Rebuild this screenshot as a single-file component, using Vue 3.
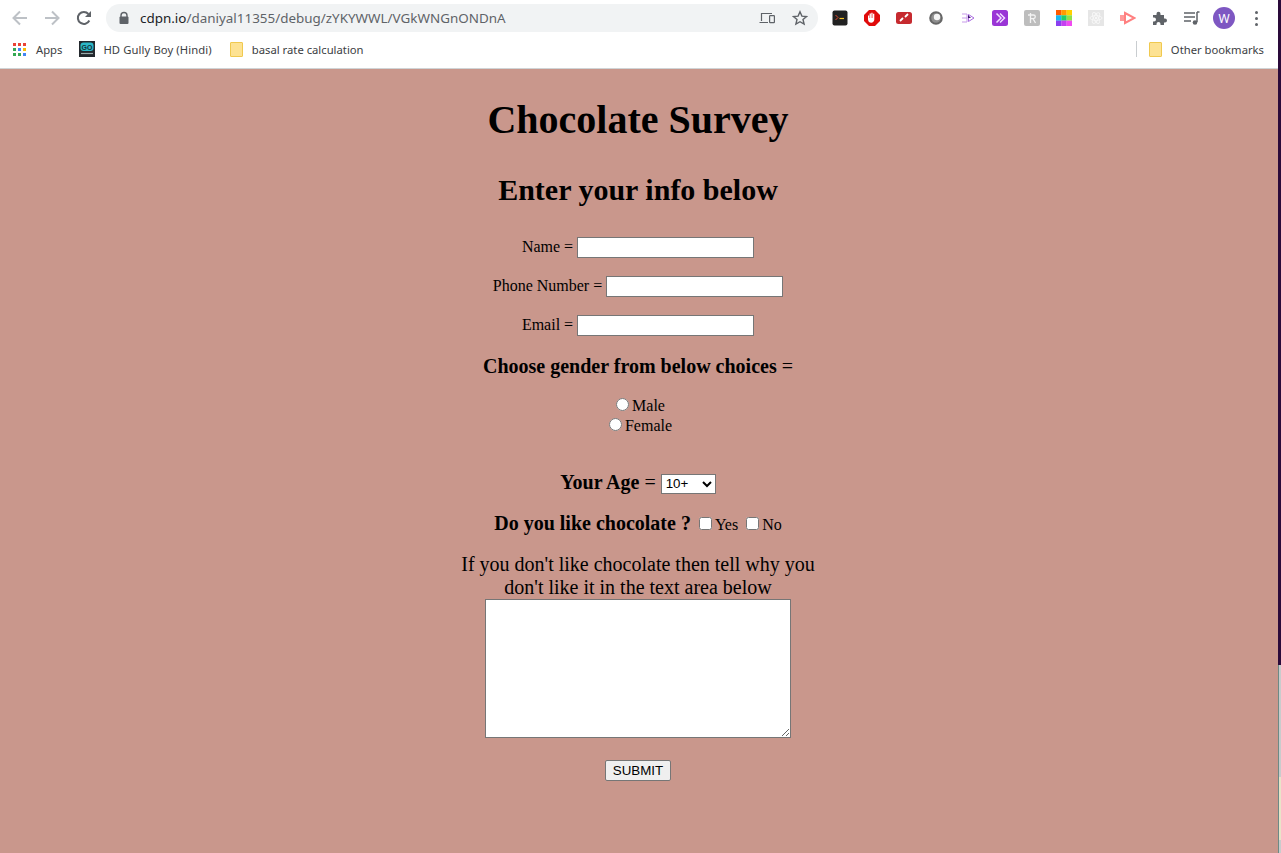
<template>
  <div class="screen">
    <div class="window">
      <div class="toolbar">
        <div class="nav-btn">
          <svg width="16" height="16" viewBox="0 0 16 16"><path d="M15 8H2M8 1.500 1.500 8 8 14.500" fill="none" stroke="#bdc1c6" stroke-width="2" /></svg>
        </div>
        <div class="nav-btn">
          <svg width="16" height="16" viewBox="0 0 16 16"><path d="M1 8h13M8 1.500 14.500 8 8 14.500" fill="none" stroke="#bdc1c6" stroke-width="2" /></svg>
        </div>
        <div class="nav-btn">
          <svg width="16" height="16" viewBox="0 0 16 16"><path d="M13.300 10.500A6 6 0 1 1 12.400 4" fill="none" stroke="#5f6368" stroke-width="2" /><path d="M15 1v6H9z" fill="#5f6368" /></svg>
        </div>
        <div class="omnibox">
          <svg class="lock" width="12" height="14" viewBox="0 0 12 14"><path d="M3 6V4.500a3 3 0 0 1 6 0V6" fill="none" stroke="#5f6368" stroke-width="1.400" /><rect x="1.500" y="5.500" width="9" height="7.500" rx="1" fill="#5f6368" /></svg>
          <span class="url"><span class="host">cdpn.io</span>/daniyal11355/debug/zYKYWWL/VGkWNGnONDnA</span>
          <svg class="omni-icon" width="16" height="12" viewBox="0 0 16 12"><path d="M2.500 9V1.500H13M.500 10.500H9" fill="none" stroke="#5f6368" stroke-width="1.200" /><rect x="10.600" y="3.600" width="4.800" height="7" rx=".6" fill="none" stroke="#5f6368" stroke-width="1.200" /></svg>
          <svg class="omni-star" width="16" height="16" viewBox="0 0 16 16"><path d="m8 1.800 1.900 4.300 4.600.4-3.500 3 1.100 4.600L8 11.700l-4.100 2.400L5 9.500l-3.500-3 4.600-.4z" fill="none" stroke="#5f6368" stroke-width="1.400" /></svg>
        </div>
        <div class="extensions">
          <div class="ext">
            <svg width="16" height="16" viewBox="0 0 16 16"><rect width="15" height="15" x=".5" y=".5" rx="2" fill="#222" /><path d="m3.500 5 2.500 2.500L3.500 10" fill="none" stroke="#e5482d" stroke-width="1" /><path d="M7.500 8.500H12" stroke="#f7c325" stroke-width="1.200" /></svg>
          </div>
          <div class="ext">
            <svg width="16" height="16" viewBox="0 0 16 16"><path d="M5 0h6l5 5v6l-5 5H5l-5-5V5z" fill="#e00b0b" /><path d="M4 9.500V5.500h1.200V8h.4V3.500h1.300V8h.4V2.800h1.300V8h.4V3.800h1.300v5.700c0 2-1.400 3.200-3.200 3.200-1.500 0-2.200-.7-2.700-1.700z" fill="#fff" /></svg>
          </div>
          <div class="ext">
            <svg width="16" height="16" viewBox="0 0 16 16"><rect y="2" width="16" height="12" rx="2.500" fill="#c62a2f" /><path d="m4 11 3-3M9 7l3-3" stroke="#fff" stroke-width="1.800" /></svg>
          </div>
          <div class="ext">
            <svg width="16" height="16" viewBox="0 0 16 16"><circle cx="8" cy="8" r="5.800" fill="#8f8f8f" stroke="#666" stroke-width="2" /><circle cx="9" cy="7" r="3.200" fill="#f4f4f4" /></svg>
          </div>
          <div class="ext">
            <svg width="16" height="16" viewBox="0 0 16 16"><path d="M2 4h5v8H2M2 8h5" fill="none" stroke="#c79bea" stroke-width="1" /><path d="M8.500 4.500v7L14 8z" fill="none" stroke="#a868e0" stroke-width="1" /><path d="M8 5v3h3z" fill="#3c1470" /></svg>
          </div>
          <div class="ext">
            <svg width="16" height="16" viewBox="0 0 16 16"><rect width="16" height="16" rx="2.500" fill="#9a35d6" /><path d="m4.500 3.500 4.500 4.500-4.500 4.500M8 3.500l4.500 4.500L8 12.500" fill="none" stroke="#f0dcff" stroke-width="1.500" /></svg>
          </div>
          <div class="ext">
            <svg width="16" height="16" viewBox="0 0 16 16"><rect width="16" height="16" rx="2" fill="#bdbdbd" /><path d="M6.500 3v10M4 5h5.500a1.800 1.800 0 0 1 0 3.600H6.500M9 8.600l2.500 4.400" fill="none" stroke="#f3f3f3" stroke-width="1.300" /></svg>
          </div>
          <div class="ext">
            <svg width="16" height="16" viewBox="0 0 16 16">
              <rect width="5.400" height="5.400" fill="#ff5a00" /><rect x="5.300" width="5.400" height="5.400" fill="#ff9a00" /><rect x="10.600" width="5.400" height="5.400" fill="#ffd000" />
              <rect y="5.300" width="5.400" height="5.400" fill="#18b8f2" /><rect x="5.300" y="5.300" width="5.400" height="5.400" fill="#1fce6a" /><rect x="10.600" y="5.300" width="5.400" height="5.400" fill="#8fe04a" />
              <rect y="10.600" width="5.400" height="5.400" fill="#8a3ff0" /><rect x="5.300" y="10.600" width="5.400" height="5.400" fill="#c43ff0" /><rect x="10.600" y="10.600" width="5.400" height="5.400" fill="#f04af0" />
            </svg>
          </div>
          <div class="ext">
            <svg width="16" height="16" viewBox="0 0 16 16"><rect width="16" height="16" fill="#e6e6e6" /><circle cx="8" cy="8" r="1.200" fill="#f7f7f7" /><g fill="none" stroke="#f7f7f7" stroke-width=".9"><ellipse cx="8" cy="8" rx="6" ry="2.400" /><ellipse cx="8" cy="8" rx="6" ry="2.400" transform="rotate(60 8 8)" /><ellipse cx="8" cy="8" rx="6" ry="2.400" transform="rotate(120 8 8)" /></g></svg>
          </div>
          <div class="ext">
            <svg width="16" height="16" viewBox="0 0 16 16"><rect y="5" width="5" height="6" fill="#ff9a9a" /><path d="M5 3 14.500 8 5 13z" fill="none" stroke="#ff8080" stroke-width="2" /></svg>
          </div>
          <div class="ext">
            <svg width="16" height="16" viewBox="0 0 16 16"><path d="M1 5h3.500V3.800a2 2 0 0 1 4 0V5H12v3.500h1a2 2 0 0 1 0 4h-1V15H8.500v-1a2 2 0 0 0-4 0v1H1v-3.500h1a2 2 0 0 0 0-4H1z" fill="#5f6368" /></svg>
          </div>
          <div class="ext">
            <svg width="16" height="16" viewBox="0 0 16 16"><path d="M0 3h11M0 7h11M0 11h7" stroke="#5f6368" stroke-width="1.300" /><path d="M13 2v10" stroke="#5f6368" stroke-width="1.500" /><path d="M13 2h2.500" stroke="#5f6368" stroke-width="1.500" /><circle cx="11" cy="12.500" r="2.300" fill="#5f6368" /></svg>
          </div>
          <div class="avatar">W</div>
          <div class="menu-dots"><i></i><i></i><i></i></div>
        </div>
      </div>

      <div class="bookmarks">
        <div class="bookmark apps">
          <div class="apps-grid">
            <i v-for="c in appColors" :key="c.id" :style="{ background: c.color }"></i>
          </div>
          <span>Apps</span>
        </div>
        <div class="bookmark movie">
          <svg width="16" height="16" viewBox="0 0 16 16"><rect width="16" height="16" fill="#23282d" /><rect x="1.500" y="1.500" width="13" height="8.500" rx="3" fill="#2bb8c8" /><text x="8" y="8.500" text-anchor="middle" font-family="Liberation Sans" font-size="7" font-weight="700" fill="#16323a">GO</text><path d="M2 12.500h12" stroke="#9aa" stroke-width="1.200" /></svg>
          <span>HD Gully Boy (Hindi)</span>
        </div>
        <div class="bookmark folder-mark">
          <svg width="13" height="15" viewBox="0 0 13 15"><path d="M1 .500h11a.500.500 0 0 1 .500.500v13a.500.500 0 0 1-.500.500H1a.500.500 0 0 1-.500-.500V1A.500.500 0 0 1 1 .500z" fill="#fde293" stroke="#f0c94f" /></svg>
          <span>basal rate calculation</span>
        </div>
        <div class="bookmarks-right">
          <div class="divider"></div>
          <svg width="13" height="15" viewBox="0 0 13 15"><path d="M1 .500h11a.500.500 0 0 1 .500.500v13a.500.500 0 0 1-.500.500H1a.500.500 0 0 1-.500-.500V1A.500.500 0 0 1 1 .500z" fill="#fde293" stroke="#f0c94f" /></svg>
          <span>Other bookmarks</span>
        </div>
      </div>

      <main class="page">
        <h1>Chocolate Survey</h1>
        <h2>Enter your info below</h2>
        <form @submit.prevent>
          <p>Name = <input type="text" v-model="form.name" /></p>
          <p>Phone Number = <input type="text" v-model="form.phone" /></p>
          <p>Email = <input type="text" v-model="form.email" /></p>
          <p class="big gender"><b>Choose gender from below choices</b> =</p>
          <div class="radios">
            <label><input type="radio" value="male" v-model="form.gender" />Male</label>
            <label><input type="radio" value="female" v-model="form.gender" />Female</label>
          </div>
          <p class="big age">
            <b>Your Age</b> =
            <select v-model="form.age">
              <option v-for="a in ages" :key="a">{{ a }}</option>
            </select>
          </p>
          <p class="likes">
            <b class="big">Do you like chocolate ?</b>
            <label><input type="checkbox" v-model="form.yes" />Yes</label>
            <label><input type="checkbox" v-model="form.no" />No</label>
          </p>
          <p class="why">
            If you don't like chocolate then tell why you<br />
            don't like it in the text area below<br />
            <textarea v-model="form.reason"></textarea>
          </p>
          <button type="submit" class="submit">SUBMIT</button>
        </form>
      </main>
    </div>
    <div class="edge">
      <div class="edge-top"></div>
      <div class="edge-bottom"></div>
    </div>
  </div>
</template>

<script setup>
import { reactive } from 'vue';

const form = reactive({
  name: '',
  phone: '',
  email: '',
  gender: '',
  age: '10+',
  yes: false,
  no: false,
  reason: ''
});

const ages = ['10+', '20+', '30+', '40+'];

const palette = ['#ea4335', '#ea4335', '#ea4335', '#34a853', '#4285f4', '#fbbc04', '#34a853', '#34a853', '#4285f4'];
const appColors = palette.map((color, id) => ({ id, color }));
</script>

<style>
html, body { margin: 0; height: 100%; overflow: hidden; }
</style>

<style scoped>
.screen { display: flex; width: 1281px; height: 853px; overflow: hidden; }
.window { width: 1278px; height: 853px; display: flex; flex-direction: column; }
.edge { flex: 1; display: flex; flex-direction: column; }
.edge-top { height: 665px; background: #2a0a3a; }
.edge-bottom { flex: 1; border-left: 1px solid #6d8a85; background: linear-gradient(#c8cccc 0, #c8cccc 112px, #e8e4c8 112px, #e8e4c8 175px, #c8cccc 175px); }

.toolbar { height: 36px; display: flex; align-items: center; background: #fff; padding-left: 4px; box-sizing: border-box; }
.nav-btn { width: 32px; height: 32px; display: flex; align-items: center; justify-content: center; }
.omnibox { margin-left: 6px; width: 712px; height: 28px; border-radius: 14px; background: #f1f3f4; display: flex; align-items: center; box-sizing: border-box; padding-left: 12px; }
.lock { flex: none; }
.url { margin-left: 10px; flex: 1; font: 13.43px "Noto Sans", sans-serif; color: #5f6368; white-space: nowrap; }
.host { color: #202124; }
.omni-icon { margin-right: 17px; }
.omni-star { margin-right: 10px; }
.extensions { margin-left: 6px; display: flex; align-items: center; }
.ext { width: 32px; height: 32px; display: flex; align-items: center; justify-content: center; }
.avatar { width: 22px; height: 22px; margin: 0 5px; border-radius: 50%; background: #7e57c2; color: #fff; font: 12px "Noto Sans", sans-serif; display: flex; align-items: center; justify-content: center; }
.menu-dots { width: 32px; display: flex; flex-direction: column; align-items: center; gap: 3px; }
.menu-dots i { width: 3px; height: 3px; border-radius: 50%; background: #5f6368; }

.bookmarks { height: 33px; padding: 0 0 6px 13px; display: flex; align-items: center; background: #fff; border-bottom: 1px solid #d0d4d6; box-sizing: border-box; font: 11.25px "Noto Sans", sans-serif; color: #3c4043; }
.bookmark { display: flex; align-items: center; white-space: nowrap; }
.apps { gap: 10px; }
.apps-grid { display: grid; grid-template-columns: repeat(3, 3px); gap: 2px; width: 13px; }
.apps-grid i { width: 3px; height: 3px; }
.movie { margin-left: 17px; gap: 8px; }
.folder-mark { margin-left: 18px; gap: 9px; }
.movie span { letter-spacing: .1px; }
.bookmarks-right { margin-left: auto; display: flex; align-items: center; gap: 9px; padding-right: 14px; }
.divider { width: 1px; height: 16px; background: #c9cdd0; margin-right: 3px; }

.page { flex: 1; background: #c9978c; text-align: center; font-family: "Liberation Serif", "Times New Roman", serif; font-size: 16px; color: #000; padding-right: 2px; overflow: hidden; }
h1 { margin: 26px 0 0; font-size: 40px; line-height: 50px; }
h2 { margin: 25px 0 0; font-size: 30px; line-height: 40px; }
form { margin-top: 27px; }
p { margin: 18px 0; }
form input[type="text"] { width: 177px; height: 21px; box-sizing: border-box; border: 1px solid #767676; padding: 1px 2px; background: #fff; vertical-align: baseline; }
.big { font-size: 20px; }
.gender { margin: 19px 0 17px; }
.radios { line-height: 20px; }
.radios label { display: block; height: 20px; }
.radios input { margin: 3px 3px 0 5px; }
.age { margin: 36px 0 18px; }
select { width: 55px; height: 20px; font: 13.333px "Liberation Sans", sans-serif; background: #fff; border: 1px solid #767676; border-radius: 0; vertical-align: 1px; }
.likes { margin-bottom: 18px; }
.likes label { margin-left: 4px; }
.why { font-size: 20px; line-height: 23px; margin: 18px 0 22px; }
textarea { width: 306px; height: 139px; box-sizing: border-box; border: 1px solid #767676; padding: 2px; background: #fff; display: block; margin: 0 auto; }
.submit { width: 66px; height: 21px; box-sizing: border-box; padding: 0; font: 13.333px "Liberation Sans", sans-serif; color: #000; background: #efefef; border: 1px solid #767676; border-radius: 2px; }
</style>
